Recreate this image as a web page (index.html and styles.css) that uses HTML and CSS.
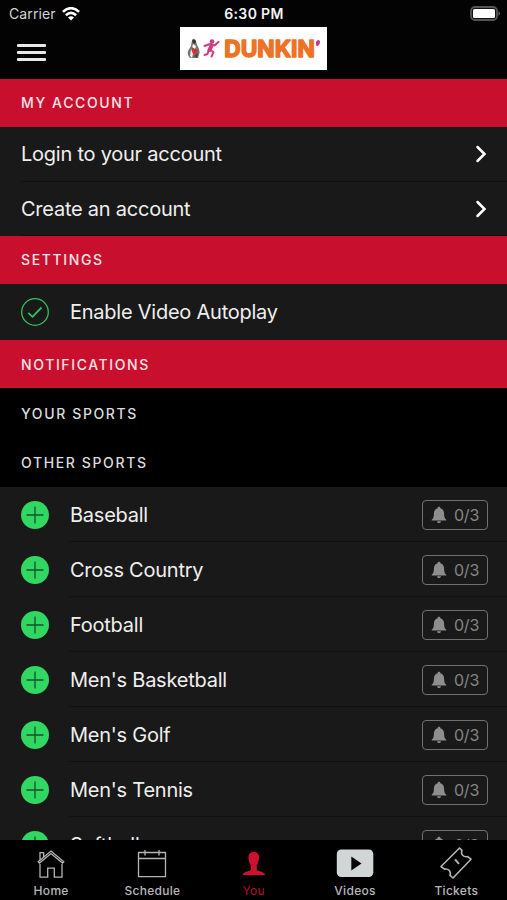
FILE: index.html
```html
<!DOCTYPE html>
<html lang="en">
<head>
<meta charset="utf-8">
<title>You</title>
<link rel="stylesheet" href="styles.css">
</head>
<body>
<svg class="defs" aria-hidden="true">
  <symbol id="plus" viewBox="0 0 28 28"><circle cx="14" cy="14" r="14" fill="#30d862"/><path d="M14 5.500v17M5.500 14h17" stroke="#17502c" stroke-width="1.300" fill="none"/></symbol>
  <symbol id="bell" viewBox="0 0 16 18"><path d="M8 .8c.9 0 1.400.6 1.400 1.400 2.500.7 3.700 2.700 3.700 5.300 0 3.500.6 4.800 2.200 6.200v.9H.7v-.9c1.600-1.400 2.200-2.700 2.200-6.200 0-2.600 1.200-4.600 3.700-5.300C6.600 1.400 7.100.8 8 .8zM6 15.200h4c-.2 1.200-1 1.900-2 1.900s-1.800-.7-2-1.900z" fill="#8e8e8e"/></symbol>
  <symbol id="chevron" viewBox="0 0 12 18"><path d="M2.500 2l7 7-7 7" fill="none" stroke="#fff" stroke-width="2.500" stroke-linecap="round"/></symbol>
</svg>
<div class="screen">
  <div class="status">
    <div class="carrier"><span>Carrier</span>
      <svg width="18" height="14" viewBox="0 0 18 14" fill="none" stroke="#fff" stroke-width="2.600"><path d="M.9 4.900Q9-2.500 17.100 4.900M3.900 8.200Q9 3.400 14.100 8.200"/><path d="M9 13.600L6 10.600Q9 8 12 10.600z" fill="#fff" stroke="none"/></svg>
    </div>
    <div class="clock">6:30 PM</div>
    <svg class="battery" width="32" height="16" viewBox="0 0 32 16"><rect x="1" y="1" width="26" height="13" rx="4" fill="#111" stroke="#555" stroke-width="1.800"/><rect x="3" y="3" width="22" height="9" rx="1.500" fill="#fff"/><path d="M28.500 5q3 2.500 0 5z" fill="#666"/></svg>
  </div>
  <header class="topbar">
    <button class="menu" aria-label="Menu"><i></i><i></i><i></i></button>
    <div class="sponsor">
      <svg width="13" height="22" viewBox="0 0 13 22"><path d="M5 2q2-3 4 1l1 4q3 4 2.500 8l-1.500 5H3Q0 17 1 13l3-5z" fill="#77736d"/><path d="M6 6l3 2-1 3-3-1z" fill="#fff"/><path d="M5 9l3 2 3 1-2 5-2-2-2 3z" fill="#cb3440"/><path d="M4 11l2 5-1 4-2-2z" fill="#eee"/><path d="M5 3q3-3 4 1l-2 2z" fill="#34323a"/><path d="M7 18l4-3-1 5z" fill="#51413f"/></svg>
      <svg width="17" height="21" viewBox="0 0 17 21" fill="none" stroke="#d03b82" stroke-linecap="round" stroke-linejoin="round"><circle cx="9" cy="3.500" r="2.300" fill="#d03b82" stroke="none"/><path d="M8.500 7.500L6.500 12" stroke-width="4"/><path d="M1.500 8l5.500-2 4.500 1.500L15.500 4M7 12l3.500 2-2 4.500M5.500 12.500L4.500 16 1.500 17" stroke-width="2"/></svg>
      <svg class="wordmark" width="97" height="43" viewBox="0 0 97 43"><text x="1.300" y="30.200" textLength="90.500" lengthAdjust="spacingAndGlyphs">DUNKIN</text><path d="M94.300 13.800q2.600-1 2.300 1.500-.2 2.700-2.600 3.700-1.500-3.500.3-5.200z" fill="#c53888" stroke="#c53888"/></svg>
    </div>
  </header>
  <main>
    <h2 class="band">MY ACCOUNT</h2>
    <a class="row link"><span>Login to your account</span><svg width="12" height="18"><use href="#chevron"/></svg></a>
    <a class="row link"><span>Create an account</span><svg width="12" height="18"><use href="#chevron"/></svg></a>
    <h2 class="band">SETTINGS</h2>
    <div class="row setting"><svg class="mark" viewBox="0 0 28 28" fill="none" stroke="#30c45c"><circle cx="14" cy="14" r="13.300" stroke-width="1.300"/><path d="M7.300 14.800l4.200 4L20.500 9.500" stroke-width="1.800"/></svg><span>Enable Video Autoplay</span></div>
    <h2 class="band last">NOTIFICATIONS</h2>
    <h3 class="sub">YOUR SPORTS</h3>
    <h3 class="sub">OTHER SPORTS</h3>
    <div class="row sport"><svg class="mark"><use href="#plus"/></svg><span>Baseball</span><div class="badge"><svg width="16" height="18"><use href="#bell"/></svg>0/3</div></div>
    <div class="row sport"><svg class="mark"><use href="#plus"/></svg><span>Cross Country</span><div class="badge"><svg width="16" height="18"><use href="#bell"/></svg>0/3</div></div>
    <div class="row sport"><svg class="mark"><use href="#plus"/></svg><span>Football</span><div class="badge"><svg width="16" height="18"><use href="#bell"/></svg>0/3</div></div>
    <div class="row sport"><svg class="mark"><use href="#plus"/></svg><span>Men's Basketball</span><div class="badge"><svg width="16" height="18"><use href="#bell"/></svg>0/3</div></div>
    <div class="row sport"><svg class="mark"><use href="#plus"/></svg><span>Men's Golf</span><div class="badge"><svg width="16" height="18"><use href="#bell"/></svg>0/3</div></div>
    <div class="row sport"><svg class="mark"><use href="#plus"/></svg><span>Men's Tennis</span><div class="badge"><svg width="16" height="18"><use href="#bell"/></svg>0/3</div></div>
    <div class="row sport"><svg class="mark"><use href="#plus"/></svg><span>Softball</span><div class="badge"><svg width="16" height="18"><use href="#bell"/></svg>0/3</div></div>
  </main>
  <nav class="tabs">
    <a class="tab"><svg width="32" height="32" viewBox="0 0 32 32" fill="none" stroke="#b4b4b4" stroke-width="1.300"><path d="M3.200 13.700L16 3l12.800 10.700-1.300 1.300L16 5.500 4.500 15zM5 11.800V4.700h3.600v4M5 14.500V29.200h7.700v-9h6.600v9H27V14.500"/></svg>Home</a>
    <a class="tab"><svg width="32" height="32" viewBox="0 0 32 32" fill="none" stroke="#b4b4b4" stroke-width="1.300"><path d="M2.500 4.500h27v24.200h-27zM2.500 10.500h27M9 2v5.500M23 2v5.500"/></svg>Schedule</a>
    <a class="tab active"><svg width="32" height="32" viewBox="0 0 32 32"><path d="M15.800 4c4 0 5.700 2.300 5.300 6.200-.3 3.300-1.400 5.500-2.300 7.400v4c.2 2 7 1.700 8.700 5.400H4.300c1.700-3.700 8.300-3.400 8.500-5.400v-4c-.9-1.900-2-4.100-2.300-7.400C10.100 6.300 11.800 4 15.800 4z" fill="#ce112f"/></svg>You</a>
    <a class="tab"><svg width="38" height="32" viewBox="0 0 38 32"><rect x=".8" y="1.500" width="36.500" height="27.500" rx="4.500" fill="#d2d5d5"/><path d="M15.300 8.500v14L25.500 15.500z" fill="#070707"/></svg>Videos</a>
    <a class="tab"><svg class="ticket" width="34" height="32" viewBox="0 0 34 32" fill="none" stroke="#b4b4b4" stroke-width="1.600" stroke-linejoin="round"><path d="M20.500 0l2.500 2.300c-1.600 4 1.300 7.300 5.700 6.300l3.300 2.600L14 30l-3-2.600c1.400-4-1.500-7-5.600-6.300L2 18.500z"/><path d="M16 11.300l4 4.500" stroke-width="2"/></svg>Tickets</a>
  </nav>
</div>
</body>
</html>
```
FILE: styles.css
```css
* { box-sizing: border-box; }
body { margin: 0; background: #000; font-family: Inter, "Liberation Sans", sans-serif; color: #efefef; }
.defs { display: none; }
.screen { height: 900px; width: 507px; display: flex; flex-direction: column; overflow: hidden; background: #030303; }
.status { height: 27px; flex: none; display: grid; grid-template-columns: 1fr auto 1fr; align-items: center; padding: 0 5px 0 9px; }
.carrier { display: flex; align-items: center; gap: 6px; font-size: 14px; letter-spacing: .1px; color: #d4d4d4; }
.clock { font-size: 14px; font-weight: 600; letter-spacing: .35px; color: #f4f4f4; padding-right: 3px; }
.battery { justify-self: end; }
.topbar { height: 52px; flex: none; display: grid; grid-template-columns: 1fr auto 1fr; align-items: start; }
.menu { display: flex; flex-direction: column; gap: 4px; width: 29px; margin: 17px 0 0 17px; padding: 0; border: 0; background: none; }
.menu i { height: 3px; border-radius: 1px; background: #e8e8e8; }
.sponsor { width: 147px; height: 43px; background: #fff; display: flex; align-items: center; padding: 0 0 0 7px; }
.sponsor svg { flex: none; margin-right: 3px; }
.sponsor .wordmark { margin: 0; overflow: visible; }
.wordmark text { font: 700 23.500px Inter, sans-serif; fill: #ee7226; stroke: #ee7226; stroke-width: 1.500px; stroke-linejoin: round; }
main { flex: 1; min-height: 0; overflow: hidden; }
h2, h3 { margin: 0; padding-left: 21px; font-size: 14px; font-weight: 500; letter-spacing: 1.620px; display: flex; align-items: center; }
.band { height: 48px; background: #c8102e; color: #fbe3e6; padding-bottom: 1px; }
.last { padding-bottom: 0; }
.sub { height: 49.500px; background: #000; color: #dcdcdc; padding-top: 1px; }
.row { height: 55px; display: flex; align-items: center; padding: 0 20px 0 21px; background: #191919; font-size: 20px; letter-spacing: -.24px; background-image: linear-gradient(#101010, #101010); background-size: 100% 1px; background-repeat: no-repeat; background-position: 21px 100%; }
.link { height: 54.500px; justify-content: space-between; }
.setting { height: 56px; background-image: none; }
.mark { width: 28px; height: 28px; flex: none; margin-right: 21px; }
.sport { background-position-x: 69px; }
.badge { margin-left: auto; width: 66px; height: 30px; margin-right: -1px; border: 1.500px solid #707070; border-radius: 4px; display: flex; align-items: center; padding-left: 8px; gap: 7px; font-size: 16px; color: #858585; }
.tabs { height: 60px; flex: none; background: #000; display: grid; grid-template-columns: repeat(5, 101.300px); }
.tab { display: flex; flex-direction: column; align-items: center; padding: 8px 0 0 1px; font-size: 12px; line-height: 16px; font-weight: 500; letter-spacing: .3px; color: #b8b8b8; gap: 3px; }
.ticket { overflow: visible; }
.active { color: #b80f2b; font-weight: 400; }
```
